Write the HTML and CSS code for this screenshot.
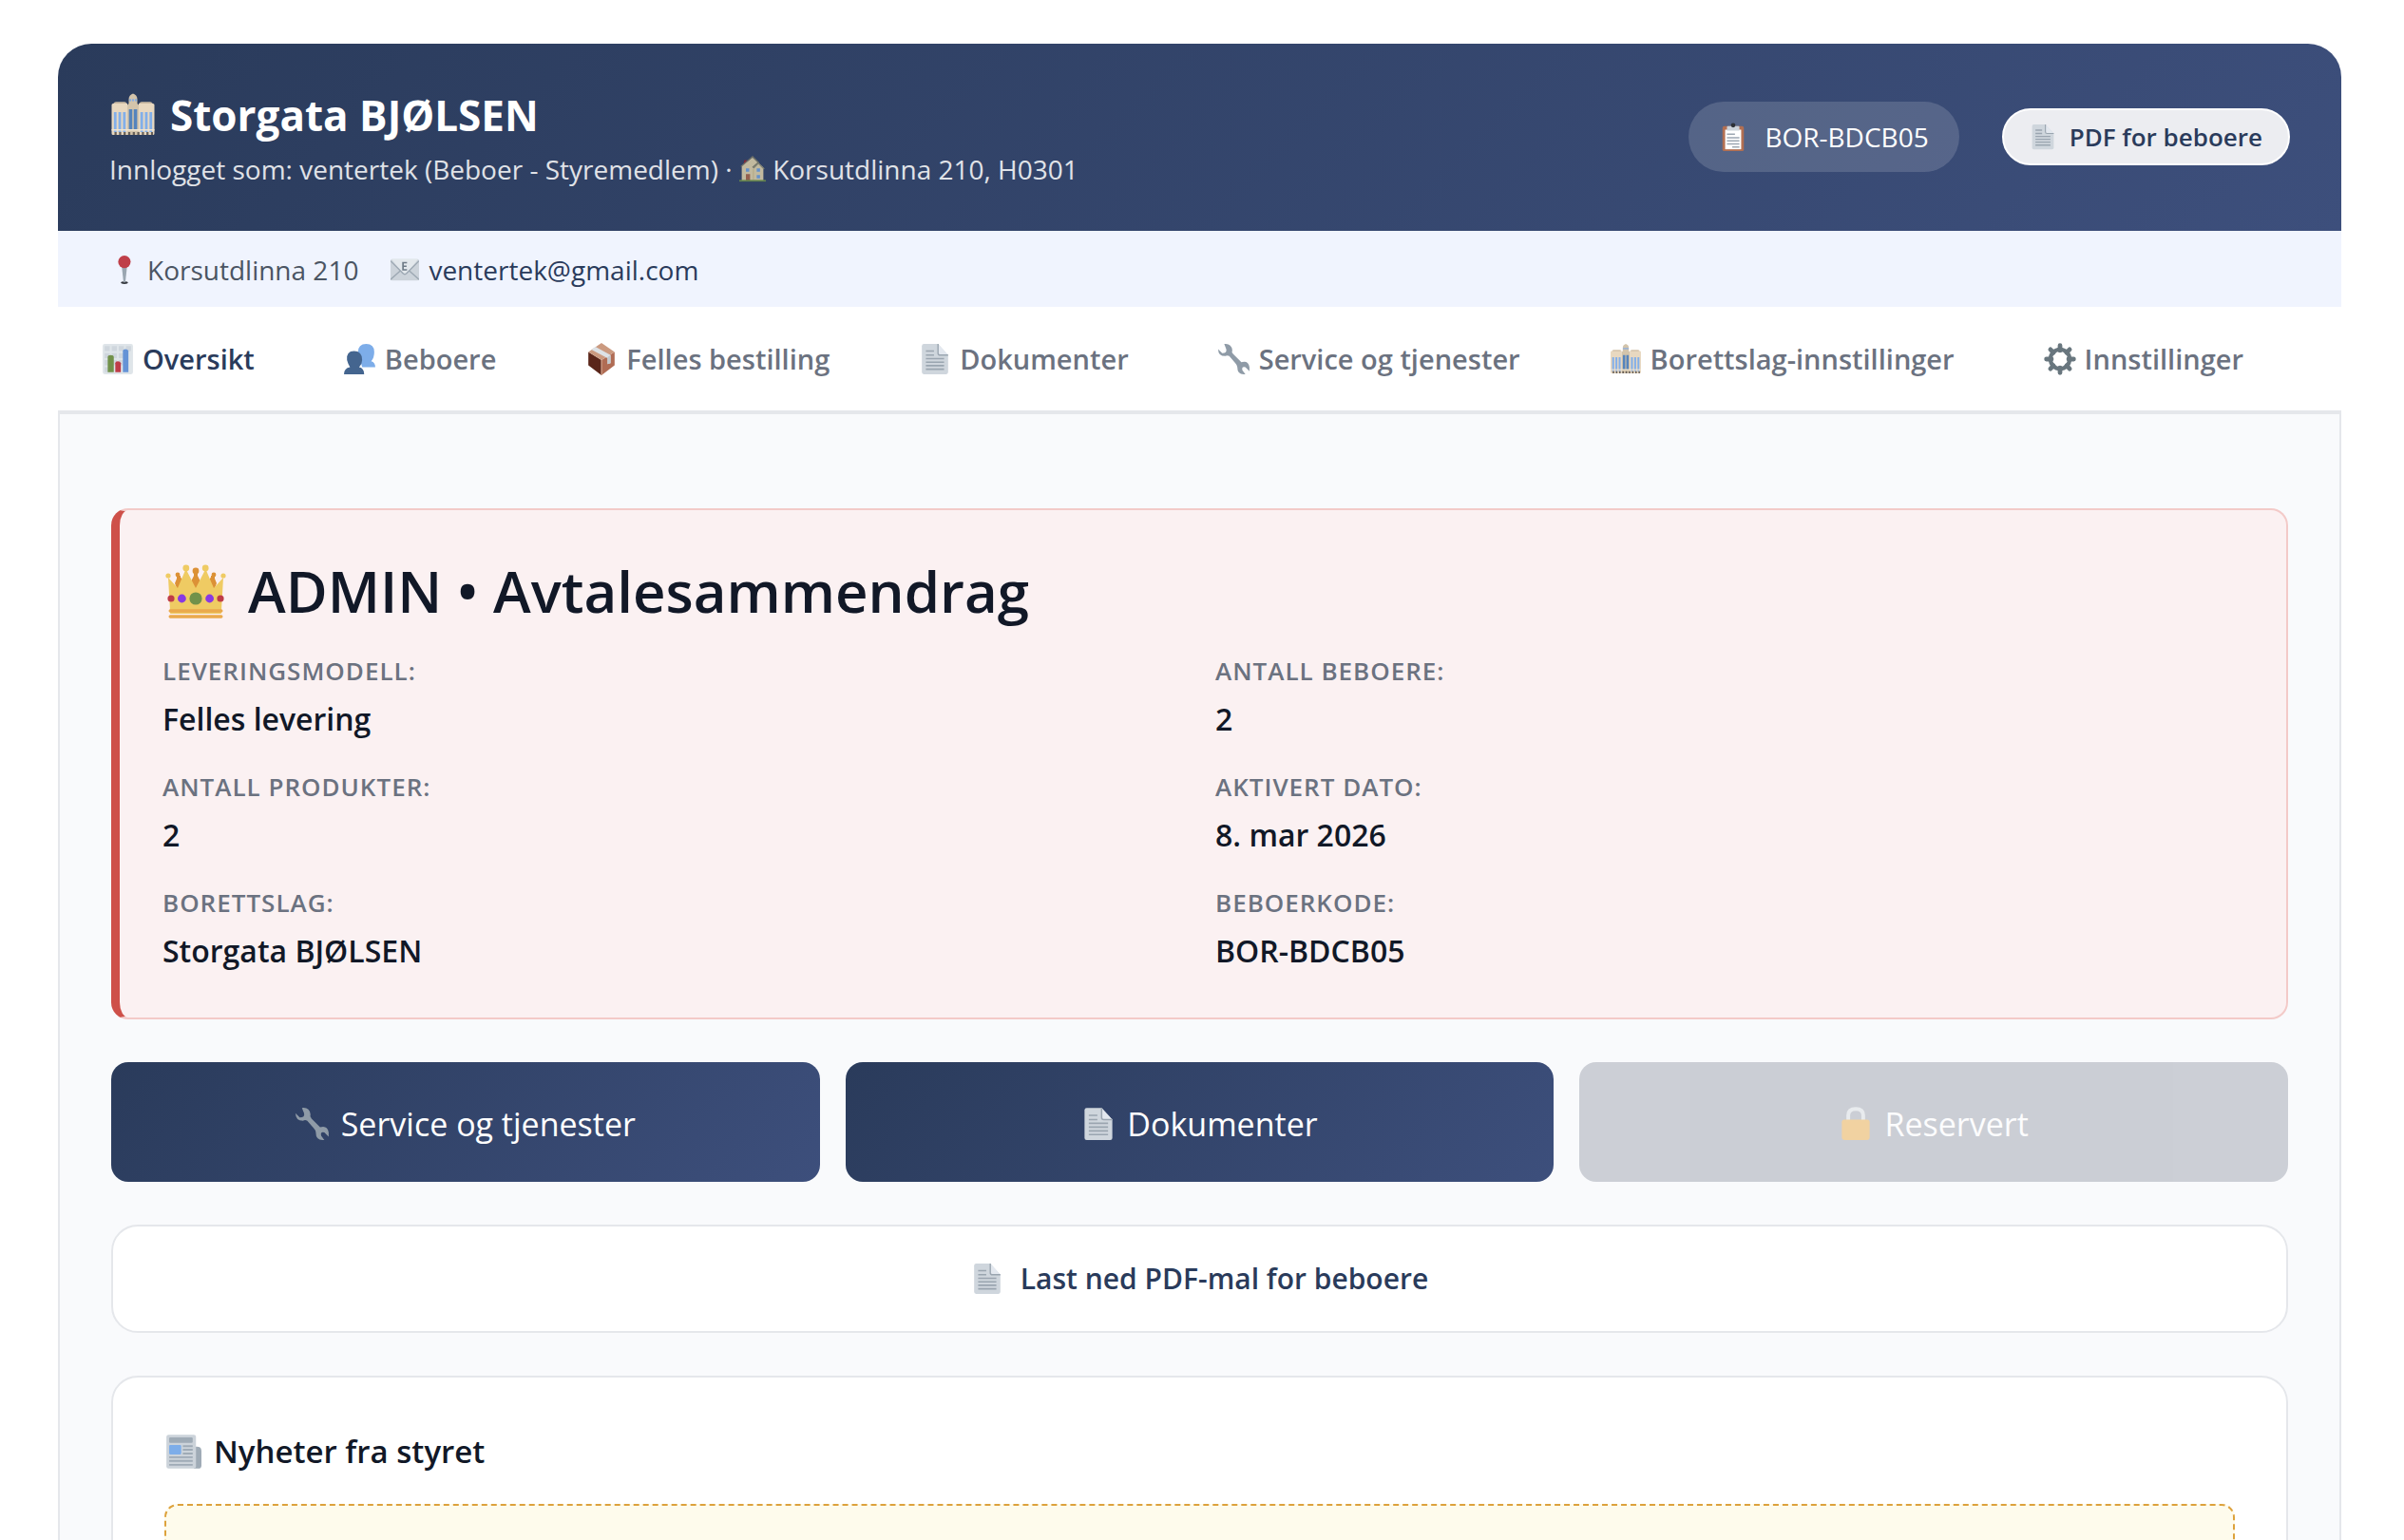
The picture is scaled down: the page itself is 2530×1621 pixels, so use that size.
FILE: index.html
```html
<!DOCTYPE html>
<html lang="no">
<head>
  <meta charset="UTF-8" />
  <meta name="viewport" content="width=device-width, initial-scale=1.0" />
  <title>Storgata BJØLSEN</title>
  <link rel="stylesheet" href="styles.css">
</head>
<body>
  <!-- Ikoner -->
  <svg class="sprite" aria-hidden="true">
    <symbol id="i-building" viewBox="0 0 32 32">
      <path d="M1 9q0-1 1-1l2-1h6l2 1v22H2q-1 0-1-1zM20 8l2-1h6l2 1q1 0 1 1v20q0 1-1 1H20z" fill="#e8d8c0"/>
      <path d="M3 7.500h8M21 7.500h8" stroke="#c9b8a0" stroke-width="1"/>
      <path d="M12 9l1-1V5q0-3 3-4 3 1 3 4v3l1 1v21h-8z" fill="#d3c4ab"/>
      <path d="M13.500 5.500h5" stroke="#7fabea" stroke-width="1.500" stroke-dasharray="1.200 .7"/>
      <path d="M3.500 14v14M6.700 14v14M9.900 14v14M22.100 14v14M25.300 14v14M28.500 14v14" stroke="#82afea" stroke-width="1.900"/>
      <path d="M14.300 12v14M17.700 12v14" stroke="#5584bd" stroke-width="2.400"/>
      <path d="M1 26.500h30" stroke="#f1e5d2" stroke-width="1"/>
      <path d="M3 29h27" stroke="#665f58" stroke-width="2" stroke-dasharray="1.500 1.700"/>
    </symbol>
    <symbol id="i-house" viewBox="0 0 32 32">
      <path d="M6 5h3v6H5z" fill="#8e2430"/>
      <path d="M3 30V12L16 2l13 12v16z" fill="#dccfa9"/>
      <path d="M2 13L16 1l7 7-7 6" fill="none" stroke="#7a7a68" stroke-width="1.500"/>
      <path d="M17 15l6-6 7 7" fill="none" stroke="#8b8a75" stroke-width="1.500"/>
      <path d="M17 16v13" stroke="#c8b785" stroke-width="1"/>
      <path d="M8 15h4v4H8zM21 15h4v4h-4zM21 23h4v4h-4z" fill="#6fa0dc"/>
      <path d="M8 22h5v8H8z" fill="#a5664c"/>
      <path d="M0 29h32v2H0z" fill="#6d8f4b"/>
    </symbol>
    <symbol id="i-clipboard" viewBox="0 0 32 32">
      <rect x="4" y="4" width="24" height="28" rx="2" fill="#b26f52"/>
      <path d="M7 8h18v22H7z" fill="#fff"/>
      <path d="M9 9V5q0-1 1-1h12q1 0 1 1v4z" fill="#ccd3da"/>
      <circle cx="16" cy="3" r="2.500" fill="#2c3036"/>
      <path d="M9 13h9M9 17h14M9 20.500h14M9 24h14M15 27.500h8" stroke="#9ca7b2" stroke-width="1.500"/>
    </symbol>
    <symbol id="i-doc" viewBox="0 0 32 32">
      <path d="M3 3q0-2 2-2h14l10 11v17q0 2-2 2H5q-2 0-2-2z" fill="#cfd6dd"/>
      <path d="M19 1l10 11h-8q-2 0-2-2z" fill="#e3e8ef"/>
      <path d="M19 1v9q0 2 2 2h8" fill="none" stroke="#9aa5b0" stroke-width="1.300"/>
      <path d="M7 8h8M7 12h8M7 15.500h18M7 19h18M7 22.500h18M7 26h18" stroke="#9aa5b0" stroke-width="1.500"/>
    </symbol>
    <symbol id="i-pin" viewBox="0 0 32 32">
      <ellipse cx="17" cy="30.500" rx="4" ry="1.500" fill="#33363c"/>
      <path d="M14 12h6l-2 18h-2z" fill="#9aa6b1"/>
      <ellipse cx="17" cy="7" rx="7" ry="7" fill="#bf3f49"/>
    </symbol>
    <symbol id="i-mail" viewBox="0 0 32 32">
      <rect x="0" y="4" width="32" height="24" rx="2" fill="#ccd3da"/>
      <path d="M1 4h30L18 20q-2 2-4 0z" fill="#e3e8ec"/>
      <path d="M0 6l14 14q2 2 4 0L32 6M0 27l11-10M32 27L21 17" fill="none" stroke="#9da8b3" stroke-width="1.500"/>
      <path d="M18.500 8H14v8h4.500M14 12h4" fill="none" stroke="#6e7a86" stroke-width="1.800"/>
    </symbol>
    <symbol id="i-chart" viewBox="0 0 32 32">
      <rect x="1" y="1" width="30" height="30" rx="2" fill="#dfe5e9"/>
      <path d="M3 3h5v5H3zM10 3h5v5h-5zM17 3h5v5h-5zM24 3h5v5h-5zM3 10h5v5H3zM10 10h5v5h-5zM17 10h5v5h-5zM3 17h5v5H3zM10 17h5v5h-5zM17 17h5v5h-5zM3 24h5v5H3z" fill="#cfd6dd"/>
      <path d="M6 29V14q0-2 3-2t3 2v15z" fill="#71914a"/>
      <path d="M13.500 29v-9q0-2 2.500-2t3 2v9z" fill="#bf3c48"/>
      <path d="M21 29V8q0-2 2.500-2t3 2v21z" fill="#6593d6"/>
    </symbol>
    <symbol id="i-people" viewBox="0 0 32 32">
      <path d="M14 9q0-8 8-8t8 8q0 6-3 9 4 1 4 6H18z" fill="#7dade9"/>
      <path d="M3 17q-1-9 7-9 8 0 8 9 0 4-3 7 5 1 5 7H0q0-6 6-7-2-3-3-7z" fill="#44658f"/>
    </symbol>
    <symbol id="i-box" viewBox="0 0 32 32">
      <path d="M3 9l13 8v15L3 22z" fill="#5a2519"/>
      <path d="M29 9v13L16 32V17z" fill="#b06c54"/>
      <path d="M16 0l13 9-13 8L3 9z" fill="#cb9a80"/>
      <path d="M6 6.500l4-2.700L25 12v8l-3 1v-6z" fill="#dde2e6"/>
      <path d="M22 14l3-2v8l-3 1z" fill="#c3c9ce"/>
      <path d="M16 17v15" stroke="#dcb09a" stroke-width="1"/>
    </symbol>
    <symbol id="i-wrench" viewBox="0 0 32 32">
      <path d="M6 1q7-1 8 6-1 2 1 4l8 8q7-2 8 5v4l-4-4q-4-1-3 3l3 4q-8 1-8-7 0-2-2-4l-6-7q-2-1-4 0-7 0-7-7l4 4q5 0 4-4z" fill="#8f9ba7"/>
    </symbol>
    <symbol id="i-gear" viewBox="0 0 32 32">
      <g stroke="#68767e" stroke-width="4.500" stroke-linecap="round">
        <path d="M16 2.500v5M16 24.500v5M2.500 16h5M24.500 16h5M6.500 6.500l3 3M22.500 22.500l3 3M25.500 6.500l-3 3M9.500 22.500l-3 3"/>
      </g>
      <circle cx="16" cy="16" r="9.500" fill="none" stroke="#68767e" stroke-width="4"/>
    </symbol>
    <symbol id="i-crown" viewBox="0 0 32 32">
      <path d="M7 13V8M25 13V8M16 13V6" stroke="#dc9136" stroke-width="2"/>
      <path d="M5 12l2-5 3 5-3 5zM22 12l3-5 2 5-2 5zM13.500 11l2.500-5 2.500 5-2.500 5z" fill="#dc9136"/>
      <circle cx="6.500" cy="7.500" r="1.200" fill="#dc9136"/><circle cx="25.500" cy="7.500" r="1.200" fill="#dc9136"/><circle cx="16" cy="5.500" r="1.700" fill="#dc9136"/>
      <path d="M2.600 28L1.500 9l5 5.500 4.300-10 5.200 10 5.200-10 4.300 10 5-5.500-1.100 19z" fill="#efcb63"/>
      <circle cx="1.500" cy="8" r="1.300" fill="#efcb63"/><circle cx="30.500" cy="8" r="1.300" fill="#efcb63"/>
      <circle cx="10.900" cy="4" r="1.700" fill="#efcb63"/><circle cx="21.100" cy="4" r="1.700" fill="#efcb63"/>
      <path d="M2.600 26.500h26.800M2.600 29.500h26.800" stroke="#eaa94c" stroke-width="1.700" stroke-linecap="round"/>
      <circle cx="16" cy="20" r="3.300" fill="#71914a"/>
      <circle cx="8.700" cy="20" r="2.200" fill="#8839e2"/><circle cx="23.300" cy="20" r="2.200" fill="#8839e2"/>
      <circle cx="3" cy="20" r="1.800" fill="#bf3c48"/><circle cx="29" cy="20" r="1.800" fill="#bf3c48"/>
    </symbol>
    <symbol id="i-lock" viewBox="0 0 32 32">
      <path d="M9 14V8q0-6 7-6t7 6v6" fill="none" stroke="#d9dde2" stroke-width="3.500"/>
      <rect x="3" y="12" width="26" height="19" rx="2.500" fill="#eaab48"/>
    </symbol>
    <symbol id="i-news" viewBox="-1 -1 33 33">
      <path d="M26 11h2q4 0 4 4v13q0 3-3 3h-4z" fill="#9fabb6"/>
      <rect x="0" y="0" width="27" height="31" rx="2" fill="#ccd3da"/>
      <rect x="2.500" y="2.500" width="21.500" height="5" rx="1" fill="#9fabb6"/>
      <rect x="2.500" y="9.500" width="11" height="8.500" rx="1" fill="#7dade9"/>
      <path d="M15 10.500h9M15 13.800h9M15 17.200h9M2.500 20.600h21.500M2.500 24h21.500M2.500 27.500h21.500" stroke="#9fabb6" stroke-width="1.600"/>
    </symbol>
  </svg>

  <div class="container">
    <header class="header">
      <div>
        <h1><svg class="icon icon-title"><use href="#i-building"/></svg>Storgata BJØLSEN</h1>
        <p class="user-info">Innlogget som: ventertek (Beboer - Styremedlem) · <svg class="icon icon-sm"><use href="#i-house"/></svg> Korsutdlinna 210, H0301</p>
      </div>
      <div class="header-actions">
        <span class="code-badge"><svg class="icon icon-md"><use href="#i-clipboard"/></svg>BOR-BDCB05</span>
        <button class="pdf-btn"><svg class="icon icon-sm"><use href="#i-doc"/></svg>PDF for beboere</button>
      </div>
    </header>

    <div class="contact-bar">
      <span class="contact-item"><svg class="icon icon-md"><use href="#i-pin"/></svg>Korsutdlinna 210</span>
      <a class="contact-item" href="mailto:ventertek@gmail.com"><svg class="icon icon-md"><use href="#i-mail"/></svg>ventertek@gmail.com</a>
    </div>

    <nav class="tabs">
      <button class="tab active"><svg class="icon"><use href="#i-chart"/></svg>Oversikt</button>
      <button class="tab"><svg class="icon"><use href="#i-people"/></svg>Beboere</button>
      <button class="tab"><svg class="icon"><use href="#i-box"/></svg>Felles bestilling</button>
      <button class="tab"><svg class="icon"><use href="#i-doc"/></svg>Dokumenter</button>
      <button class="tab"><svg class="icon"><use href="#i-wrench"/></svg>Service og tjenester</button>
      <button class="tab"><svg class="icon"><use href="#i-building"/></svg>Borettslag-innstillinger</button>
      <button class="tab"><svg class="icon"><use href="#i-gear"/></svg>Innstillinger</button>
    </nav>

    <main class="content">
      <section class="summary">
        <h2><svg class="icon icon-crown"><use href="#i-crown"/></svg>ADMIN • Avtalesammendrag</h2>
        <dl class="summary-grid">
          <div><dt>Leveringsmodell:</dt><dd>Felles levering</dd></div>
          <div><dt>Antall beboere:</dt><dd>2</dd></div>
          <div><dt>Antall produkter:</dt><dd>2</dd></div>
          <div><dt>Aktivert dato:</dt><dd>8. mar 2026</dd></div>
          <div><dt>Borettslag:</dt><dd>Storgata BJØLSEN</dd></div>
          <div><dt>Beboerkode:</dt><dd>BOR-BDCB05</dd></div>
        </dl>
      </section>

      <div class="actions">
        <button class="action"><svg class="icon icon-lg"><use href="#i-wrench"/></svg>Service og tjenester</button>
        <button class="action"><svg class="icon icon-lg"><use href="#i-doc"/></svg>Dokumenter</button>
        <button class="action" disabled><svg class="icon icon-lg"><use href="#i-lock"/></svg>Reservert</button>
      </div>

      <button class="download"><svg class="icon"><use href="#i-doc"/></svg>Last ned PDF-mal for beboere</button>

      <section class="card">
        <h3><svg class="icon icon-news"><use href="#i-news"/></svg>Nyheter fra styret</h3>
        <div class="notice"></div>
      </section>
    </main>
  </div>
</body>
</html>
```
FILE: styles.css
```css
* {
  box-sizing: border-box;
  margin: 0;
  padding: 0;
}

body {
  background: #fff;
  color: #111827;
  font-family: 'Segoe UI', 'Open Sans', 'Noto Sans', sans-serif;
  font-size: 28px;
  line-height: 40px;
  padding: 46px 66px 0 61px;
}

button {
  font-family: inherit;
  border: none;
  cursor: pointer;
}

.sprite {
  display: none;
}

.icon {
  width: 34px;
  height: 34px;
  flex-shrink: 0;
}

.icon-sm {
  width: 28px;
  height: 28px;
}

.icon-md {
  width: 30px;
  height: 30px;
}

.icon-lg {
  width: 36px;
  height: 36px;
}

.icon-news {
  width: 40px;
  height: 38px;
}

.icon-title {
  width: 50px;
  height: 48px;
}

.icon-crown {
  width: 70px;
  height: 64px;
}

/* Header */
.header {
  display: flex;
  justify-content: space-between;
  align-items: center;
  padding: 44px 54px 45px;
  background: linear-gradient(135deg, #2a3b5b, #3d4f7c);
  color: #fff;
  border-radius: 35px 35px 0 0;
}

.header h1 {
  display: flex;
  align-items: center;
  gap: 14px;
  font-size: 44px;
  line-height: 62px;
  font-weight: 700;
}

.user-info {
  margin-top: 6px;
  opacity: 0.85;
}

.user-info .icon {
  vertical-align: -3px;
}

.header-actions {
  display: flex;
  align-items: center;
  gap: 45px;
}

.code-badge {
  display: flex;
  align-items: center;
  gap: 18px;
  padding: 17px 32px;
  background: rgba(255, 255, 255, 0.15);
  border-radius: 37px;
}

.pdf-btn {
  display: flex;
  align-items: center;
  gap: 14px;
  padding: 10px 27px;
  background: #ecedf1;
  border: 2px solid #fff;
  border-radius: 30px;
  color: #2a3b5b;
  font-size: 26px;
  font-weight: 600;
  line-height: 36px;
}

.contact-bar {
  display: flex;
  gap: 34px;
  padding: 21px 54px 19px;
  background: #f0f4fe;
  color: #4b5563;
}

.contact-item {
  display: flex;
  align-items: center;
  gap: 10px;
}

a.contact-item {
  color: #2a3b5b;
  text-decoration: none;
}

/* Tabs */
.tabs {
  display: flex;
  border-bottom: 4px solid #e5e7eb;
}

.tab {
  display: flex;
  align-items: center;
  gap: 9px;
  padding: 33px 48px 32px 46px;
  background: none;
  color: #6b7280;
  font-size: 29px;
  font-weight: 600;
  line-height: 44px;
  white-space: nowrap;
}

.tab.active {
  color: #2a3b5b;
}

/* Content */
.content {
  display: flex;
  flex-direction: column;
  gap: 45px;
  padding: 99px 54px 54px;
  background: #f9fafc;
  border: 2px solid #e5e7eb;
  border-top: none;
}

.summary {
  padding: 43px 45px 41px;
  background: #fbf1f2;
  border: 2px solid #f3cac8;
  border-left: 9px solid #ce5049;
  border-radius: 18px;
}

.summary h2 {
  display: flex;
  align-items: center;
  gap: 20px;
  font-size: 60px;
  font-weight: 600;
  line-height: 84px;
}

.summary-grid {
  display: grid;
  grid-template-columns: 1fr 1fr;
  gap: 20px 26px;
  margin-top: 20px;
}

.summary dt {
  color: #6b7280;
  font-size: 26px;
  font-weight: 600;
  letter-spacing: 1px;
  line-height: 44px;
  text-transform: uppercase;
}

.summary dd {
  font-size: 32px;
  font-weight: 600;
  line-height: 58px;
}

.actions {
  display: grid;
  grid-template-columns: repeat(3, 1fr);
  gap: 27px;
}

.action {
  display: flex;
  justify-content: center;
  align-items: center;
  gap: 12px;
  padding: 40px 38px 36px;
  background: linear-gradient(135deg, #2a3b5b, #3d4f7c);
  border-radius: 18px;
  color: #fff;
  font-size: 34px;
  line-height: 50px;
}

.action:disabled {
  background: #9fa4af;
  opacity: 0.5;
  cursor: not-allowed;
}

.download {
  display: flex;
  justify-content: center;
  align-items: center;
  gap: 18px;
  padding: 33px;
  background: #fff;
  border: 2px solid #e5e7eb;
  border-radius: 28px;
  color: #2a3b5b;
  font-size: 30px;
  font-weight: 600;
  line-height: 44px;
}

.card {
  padding: 54px;
  background: #fff;
  border: 2px solid #e5e7eb;
  border-radius: 28px;
}

.card h3 {
  display: flex;
  align-items: center;
  gap: 12px;
  font-size: 33px;
  font-weight: 600;
  line-height: 48px;
}

.notice {
  margin-top: 31px;
  min-height: 160px;
  background: #fefbec;
  border: 2px dashed #dda23c;
  border-radius: 14px;
}
```
